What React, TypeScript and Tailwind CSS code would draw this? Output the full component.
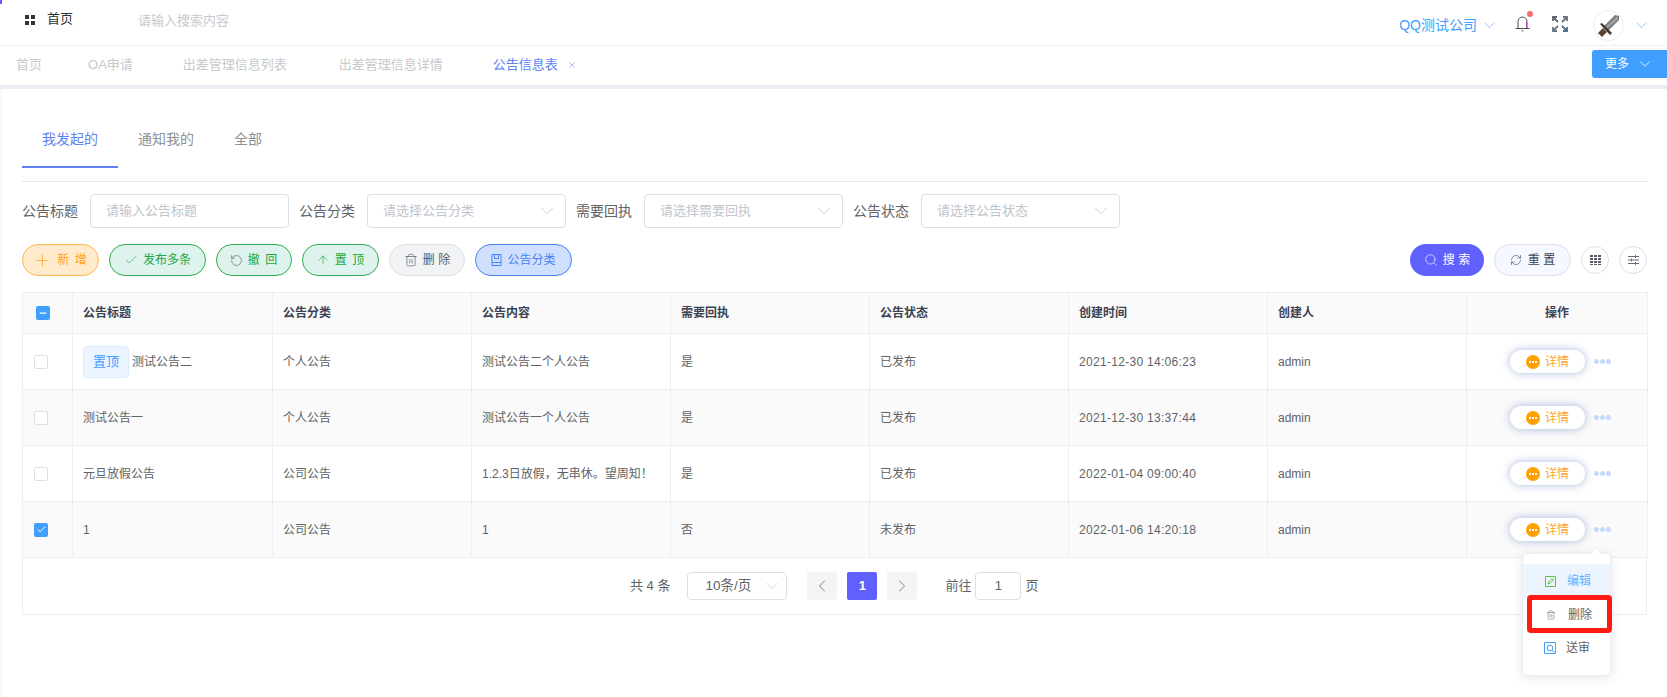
import React from 'react';
import { Plus, Check, RotateCw, ArrowUp, Trash2, Search, RefreshCw, ChevronDown, ChevronLeft, ChevronRight, X, Minus } from 'lucide-react';

const FONT = '"Liberation Sans","Noto Sans CJK SC",sans-serif';

function Sword() {
  return (
    <svg width="24" height="24" viewBox="0 0 24 24">
      <path d="M22 2 L18 1 L7 12 L11 17 L22 6 Z" fill="#7d7d7d" />
      <path d="M20 3 L9 13 L10 14 L21 5 Z" fill="#aaaaaa" />
      <path d="M3 10 L5 9 L15 19 L13 21 Z" fill="#43352c" />
      <path d="M6 14 L10 18 L5 23 L1 19 Z" fill="#5b4436" />
    </svg>
  );
}

function Fullscreen() {
  return (
    <svg width="16" height="16" viewBox="0 0 16 16" fill="none" stroke="#5d6470" strokeWidth="1.8">
      <path d="M1 5V1h4M1 1l5 5" />
      <path d="M11 1h4v4M15 1l-5 5" stroke="#6b7280" />
      <path d="M1 11v4h4M1 15l5-5" stroke="#6b7280" />
      <path d="M15 11v4h-4M15 15l-5-5" stroke="#4f6f8f" />
    </svg>
  );
}

function BellIcon() {
  return (
    <svg width="15" height="18" viewBox="0 0 15 18" fill="none" stroke="#4a4658" strokeWidth="1">
      <path d="M3 14V7.5a4.5 4.5 0 0 1 9 0V14" />
      <path d="M11.5 8v6" stroke="#b04ab8" />
      <path d="M0.5 14.5h14" />
      <path d="M6.5 16.8h2" />
    </svg>
  );
}

function GridIcon() {
  return (
    <svg width="11" height="10" viewBox="0 0 11 10" fill="#555a63">
      <path d="M0 0h3v2H0zM4 0h3v2H4zM8 0h3v2H8zM0 3h3v2H0zM4 3h3v2H4zM8 3h3v2H8zM0 6h3v2H0zM4 6h3v2H4zM8 6h3v2H8zM0 9h3v1H0zM4 9h3v1H4zM8 9h3v1H8z" />
    </svg>
  );
}

function TuneIcon() {
  return (
    <svg width="11" height="10" viewBox="0 0 11 10" fill="none" stroke="#666c75" strokeWidth="1">
      <path d="M0 1.5h11M0 5h11M0 8.5h11" />
      <path d="M7.5 0v3M3.5 3.5v3M7.5 7v3" />
    </svg>
  );
}

function Field({ label, placeholder, select }: { label: string; placeholder: string; select?: boolean }) {
  return (
    <div className="flex items-center">
      <span className="w-[56px] text-[14px] text-[#606266]">{label}</span>
      <div className="ml-[12px] flex h-[34px] w-[199px] items-center justify-between rounded-[4px] border border-[#dcdfe6] pl-[15px] pr-[7px] text-[13px] text-[#c0c4cc]">
        <span>{placeholder}</span>
        {select && <ChevronDown size={22} strokeWidth={0.9} className="text-[#c0c4cc]" />}
      </div>
    </div>
  );
}

function ToolBtn({ w, cls, icon, children }: { w: string; cls: string; icon: React.ReactNode; children: React.ReactNode }) {
  return (
    <div className={`flex h-[32px] items-center justify-center gap-[5px] rounded-[16px] border text-[12px] ${w} ${cls}`}>
      {icon}
      <span>{children}</span>
    </div>
  );
}

function Box({ checked }: { checked?: boolean }) {
  return checked ? (
    <div className="flex h-[14px] w-[14px] items-center justify-center rounded-[2px] bg-[#409eff]">
      <Check size={11} strokeWidth={2} className="text-white" />
    </div>
  ) : (
    <div className="h-[14px] w-[14px] rounded-[2px] border border-[#dcdfe6] bg-white" />
  );
}

const rows = [
  { pin: true, t: '测试公告二', c: '个人公告', n: '测试公告二个人公告', r: '是', s: '已发布', d: '2021-12-30 14:06:23' },
  { t: '测试公告一', c: '个人公告', n: '测试公告一个人公告', r: '是', s: '已发布', d: '2021-12-30 13:37:44' },
  { t: '元旦放假公告', c: '公司公告', n: '1.2.3日放假，无串休。望周知！', r: '是', s: '已发布', d: '2022-01-04 09:00:40' },
  { t: '1', c: '公司公告', n: '1', r: '否', s: '未发布', d: '2022-01-06 14:20:18', checked: true },
];

const tdc = 'border border-[#ebeef5] px-[10px] text-[12px] text-[#606266]';
const thc = 'border border-[#ebeef5] px-[10px] text-left text-[12px] font-bold text-[#3c4353]';

function Dots() {
  return (
    <div className="flex gap-[1px]">
      <i className="h-[5px] w-[5px] rounded-full bg-[#c6d8fb]" />
      <i className="h-[5px] w-[5px] rounded-full bg-[#c6d8fb]" />
      <i className="h-[5px] w-[5px] rounded-full bg-[#c6d8fb]" />
    </div>
  );
}

function Detail() {
  return (
    <div className="flex items-center pl-[43px]">
      <div className="flex h-[23px] w-[75px] items-center justify-center gap-[5px] rounded-[12px] bg-white shadow-[0_0_8px_rgba(70,100,190,0.45)]">
        <span className="flex h-[14px] w-[14px] items-center justify-center gap-[1px] rounded-full bg-[#ff9f00]">
          <i className="h-[2px] w-[2px] bg-white" />
          <i className="h-[2px] w-[2px] bg-white" />
          <i className="h-[2px] w-[2px] bg-white" />
        </span>
        <span className="text-[12px] text-[#ff9f2e]">详情</span>
      </div>
      <div className="ml-[9px]"><Dots /></div>
    </div>
  );
}

export default function App() {
  return (
    <div className="relative h-[697px] w-[1667px] overflow-hidden bg-white" style={{ fontFamily: FONT }}>
      <div className="absolute left-0 top-0 h-[4px] w-[2px] bg-[#6060ff]" />
      {/* top bar */}
      <header className="flex h-[46px] items-start border-b border-[#f0f0f0]">
        <div className="ml-[25px] mt-[15px] grid h-[10px] w-[10px] grid-cols-2 gap-[2px]">
          <i className="bg-[#30343c]" /><i className="bg-[#30343c]" /><i className="bg-[#30343c]" /><i className="bg-[#30343c]" />
        </div>
        <span className="ml-[12px] mt-[9px] text-[13px] leading-[20px] text-[#303133]">首页</span>
        <span className="ml-[65px] mt-[11px] text-[13px] leading-[20px] text-[#c8c9cc]">请输入搜索内容</span>
        <div className="ml-auto mt-[15px] flex items-center text-[14px] leading-[20px] text-[#409eff]">
          <span>QQ测试公司</span>
          <ChevronDown size={17} strokeWidth={1} className="ml-[4px] text-[#6ea8e8]" />
        </div>
        <div className="relative ml-[17px] mt-[14px]">
          <BellIcon />
          <i className="absolute -right-[3px] -top-[3px] h-[6px] w-[6px] rounded-full bg-[#f56c6c]" />
        </div>
        <div className="ml-[22px] mt-[16px]"><Fullscreen /></div>
        <div className="ml-[25px] mt-[10px] flex h-[31px] w-[31px] items-center justify-center rounded-full border border-[#eeeeee]">
          <Sword />
        </div>
        <ChevronDown size={17} strokeWidth={1} className="ml-[9px] mr-[17px] mt-[17px] text-[#6ea8e8]" />
      </header>

      {/* tabs bar */}
      <div className="flex h-[39px] items-center pb-[2px] text-[13px] text-[#c8c9cc]">
        <span className="ml-[16px]">首页</span>
        <span className="ml-[46px]">OA申请</span>
        <span className="ml-[50px]">出差管理信息列表</span>
        <span className="ml-[52px]">出差管理信息详情</span>
        <span className="ml-[50px] text-[#5f82f5]">公告信息表</span>
        <X size={10} strokeWidth={1.25} className="ml-[9px] text-[#5f82f5]" />
        <div className="ml-auto -mt-[2px] flex h-[28px] w-[75px] items-center justify-center gap-[7px] rounded-l-[3px] bg-[#409eff] text-[12px] text-white">
          <span>更多</span>
          <ChevronDown size={18} strokeWidth={1.1} />
        </div>
      </div>
      <div className="h-[4px] bg-[#ebedf3]" />

      {/* content */}
      <main className="h-[608px] border-l-[2px] border-[#f4f8ff] pl-[20px] pr-[20px]">
        <nav className="flex h-[93px] items-start border-b border-[#e4e7ed] text-[14px] leading-[20px] text-[#8c8f96]">
          <div className="mt-[40px] flex h-[39px] w-[96px] justify-center border-b-[2px] border-[#5f82f5] text-[#5f82f5]">我发起的</div>
          <div className="ml-[20px] mt-[40px]">通知我的</div>
          <div className="ml-[40px] mt-[40px]">全部</div>
        </nav>

        <div className="mt-[12px] flex gap-[10px]">
          <Field label="公告标题" placeholder="请输入公告标题" />
          <Field label="公告分类" placeholder="请选择公告分类" select />
          <Field label="需要回执" placeholder="请选择需要回执" select />
          <Field label="公告状态" placeholder="请选择公告状态" select />
        </div>

        <div className="mt-[16px] flex items-center">
          <div className="flex gap-[10px]">
            <ToolBtn w="w-[77px]" cls="border-[#ffb84d] bg-[#ffebcc] text-[#ff9f1a] tracking-[1px]" icon={<Plus size={19} strokeWidth={0.9} />}>新&nbsp;增</ToolBtn>
            <ToolBtn w="w-[97px]" cls="border-[#2fae4a] bg-[#def3ee] text-[#22a63c]" icon={<Check size={14} strokeWidth={1.1} />}>发布多条</ToolBtn>
            <ToolBtn w="w-[76px]" cls="border-[#2fae4a] bg-[#def3ee] text-[#22a63c] tracking-[1px]" icon={<RotateCw size={13} strokeWidth={1.1} className="-scale-x-100 text-[#555]" />}>撤&nbsp;回</ToolBtn>
            <ToolBtn w="w-[77px]" cls="border-[#2fae4a] bg-[#def3ee] text-[#22a63c] tracking-[1px]" icon={<ArrowUp size={14} strokeWidth={1.1} />}>置&nbsp;顶</ToolBtn>
            <ToolBtn w="w-[76px]" cls="border-[#dcdfe6] bg-[#f2f3f5] text-[#555b66]" icon={<Trash2 size={14} strokeWidth={1.1} />}>删&nbsp;除</ToolBtn>
            <ToolBtn w="w-[97px]" cls="border-[#4a80f5] bg-[#cfe0ff] text-[#4a80f5]" icon={
              <svg width="11" height="12" viewBox="0 0 11 12" fill="none" stroke="currentColor"><path d="M1 .5h9v11H1zM3.5.5v4h4v-4M1 8.5h9" /></svg>
            }>公告分类</ToolBtn>
          </div>
          <div className="ml-auto flex items-center">
            <div className="flex h-[32px] w-[74px] items-center justify-center gap-[5px] rounded-[16px] bg-[#6060ff] text-[12px] text-white">
              <Search size={14} strokeWidth={1.1} /><span>搜&nbsp;索</span>
            </div>
            <div className="ml-[10px] flex h-[32px] w-[77px] items-center justify-center gap-[6px] rounded-[16px] border border-[#dcdfe6] bg-[#f5f9ff] text-[12px] text-[#3c4353]">
              <RefreshCw size={12} strokeWidth={1.2} /><span>重&nbsp;置</span>
            </div>
            <div className="ml-[10px] flex h-[28px] w-[28px] items-center justify-center rounded-full border border-[#dcdfe6]">
              <GridIcon />
            </div>
            <div className="ml-[10px] flex h-[28px] w-[28px] items-center justify-center rounded-full border border-[#dcdfe6]">
              <TuneIcon />
            </div>
          </div>
        </div>

        {/* table */}
        <div className="mt-[16px] w-[1625px]">
          <table className="w-full table-fixed border-collapse">
            <colgroup>
              <col className="w-[50px]" />
              <col className="w-[200px]" />
              <col className="w-[199px]" /><col className="w-[199px]" /><col className="w-[199px]" />
              <col className="w-[199px]" /><col className="w-[199px]" /><col className="w-[199px]" />
              <col className="w-[181px]" />
            </colgroup>
            <thead>
              <tr className="h-[41px] bg-[#fafafa]">
                <th className={thc}>
                  <div className="ml-[3px] flex h-[14px] w-[14px] items-center justify-center rounded-[2px] bg-[#409eff] text-white">
                    <Minus size={10} strokeWidth={3} />
                  </div>
                </th>
                {['公告标题', '公告分类', '公告内容', '需要回执', '公告状态', '创建时间', '创建人'].map((h) => (
                  <th key={h} className={thc}>{h}</th>
                ))}
                <th className={`${thc} !text-center`}>操作</th>
              </tr>
            </thead>
            <tbody>
              {rows.map((r, i) => (
                <tr key={i} className={`h-[56px] ${i % 2 ? 'bg-[#fafafa]' : 'bg-white'}`}>
                  <td className={`${tdc} !px-[11px]`}><Box checked={r.checked} /></td>
                  <td className={tdc}>
                    <div className="flex items-center gap-[3px]">
                      {r.pin && (
                        <span className="flex h-[32px] w-[46px] items-center justify-center rounded-[4px] border border-[#d9ecff] bg-[#ecf5ff] text-[13px] text-[#409eff]">置顶</span>
                      )}
                      <span>{r.t}</span>
                    </div>
                  </td>
                  <td className={tdc}>{r.c}</td>
                  <td className={tdc}>{r.n}</td>
                  <td className={tdc}>{r.r}</td>
                  <td className={tdc}>{r.s}</td>
                  <td className={`${tdc} tracking-[0.3px]`}>{r.d}</td>
                  <td className={tdc}>admin</td>
                  <td className="border border-[#ebeef5]"><Detail /></td>
                </tr>
              ))}
            </tbody>
          </table>
          <div className="flex h-[57px] items-center border border-t-0 border-[#ebeef5] pl-[607px] text-[13px] text-[#606266]">
            <span>共 4 条</span>
            <div className="ml-[17px] flex h-[28px] w-[100px] items-center justify-between rounded-[4px] border border-[#dcdfe6] pl-[17px] pr-[4px] text-[13.5px]">
              <span>10条/页</span>
              <ChevronDown size={20} strokeWidth={0.9} className="text-[#c0c4cc]" />
            </div>
            <div className="ml-[20px] flex h-[28px] w-[30px] items-center justify-center rounded-[2px] bg-[#f4f4f5] text-[#b0b3ba]"><ChevronLeft size={20} strokeWidth={1.3} /></div>
            <div className="ml-[10px] flex h-[28px] w-[30px] items-center justify-center rounded-[2px] bg-[#6060ff] text-[13px] font-bold text-white">1</div>
            <div className="ml-[10px] flex h-[28px] w-[30px] items-center justify-center rounded-[2px] bg-[#f4f4f5] text-[#b0b3ba]"><ChevronRight size={20} strokeWidth={1.3} /></div>
            <span className="ml-[28px]">前往</span>
            <div className="ml-[4px] flex h-[28px] w-[46px] items-center justify-center rounded-[4px] border border-[#dcdfe6]">1</div>
            <span className="ml-[4px]">页</span>
          </div>
        </div>
      </main>

      {/* dropdown overlay */}
      <div className="absolute left-[1522px] top-[553px] h-[123px] w-[89px] rounded-[4px] border border-[#ebeef5] bg-white pt-[10px] text-[12px] text-[#606266] shadow-[0_2px_12px_rgba(0,0,0,0.1)]">
        <div className="absolute -top-[5px] left-[68px] h-[9px] w-[9px] rotate-45 border-l border-t border-[#ebeef5] bg-white" />
        <div className="flex h-[34px] items-center bg-[#ecf5ff] pl-[22px] text-[#66b1ff]">
          <svg width="11" height="11" viewBox="0 0 11 11" fill="none" stroke="#67c23a"><path d="M.5.5h10v10H.5z" /><path d="M3 8l.6-2 3.5-3.5 1.4 1.4L5 7.4z" /></svg>
          <span className="ml-[11px]">编辑</span>
        </div>
        <div className="flex h-[33px] items-center pl-[23px]">
          <Trash2 size={10} strokeWidth={1.8} className="text-[#909399]" />
          <span className="ml-[12px]">删除</span>
        </div>
        <div className="flex h-[33px] items-center pl-[21px]">
          <svg width="12" height="12" viewBox="0 0 12 12" fill="none" stroke="#409eff"><path d="M.5.5h11v11H.5z" /><circle cx="6" cy="6" r="2.8" /><path d="M8 8l2.5 2.5" /></svg>
          <span className="ml-[10px]">送审</span>
        </div>
      </div>
      <div className="absolute left-[1527px] top-[595px] h-[38px] w-[85px] rounded-[4px] border-[5px] border-[#ff1a12]" />
    </div>
  );
}
